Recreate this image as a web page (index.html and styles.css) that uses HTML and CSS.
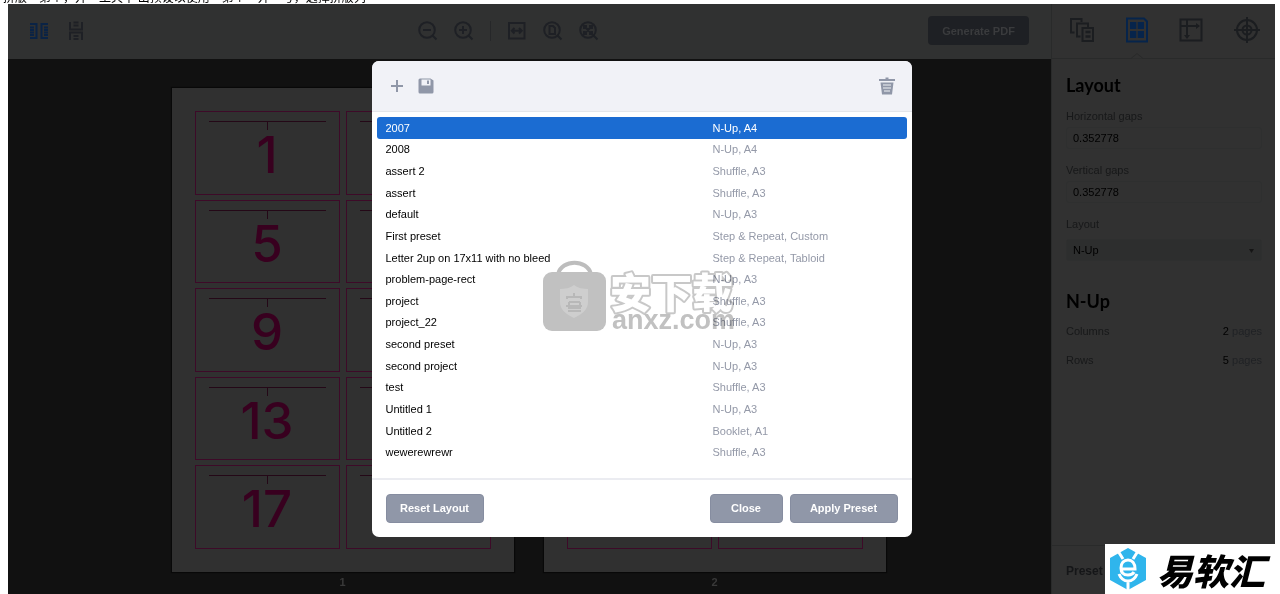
FILE: index.html
```html
<!DOCTYPE html>
<html lang="en">
<head>
<meta charset="utf-8">
<title>Layout presets</title>
<link rel="stylesheet" href="styles.css">
</head>
<body>
<p class="caption" lang="zh">拼版”第个，并“工具中 出预设以使用“第个”并“号，选择拼版列</p>
<main class="app">
  <section class="workspace">
    <header class="toolbar">
      <div class="tools views">
        <button class="tool active" aria-label="Side by side"><svg width="20" height="18" viewBox="0 0 20 18"><path d="M1 2h6.500v14H1M19 2h-6.500v14H19M1 5.500h4M1 8h4M1 10.500h4M1 13h4M15 5.500h4M15 8h4M15 10.500h4M15 13h4"/></svg></button>
        <button class="tool" aria-label="Stacked"><svg width="14" height="20" viewBox="0 0 14 20"><path d="M1 1v7.500h12V1M1 19v-7.500h12V19M4.500 1.500h5M4.500 4.500h5M4.500 15h5M4.500 18h5"/></svg></button>
      </div>
      <div class="tools zoom">
        <button class="tool" aria-label="Zoom out"><svg width="20" height="20" viewBox="0 0 20 20"><circle cx="9" cy="9" r="7.800"/><path d="M14.500 14.500l4 4M5 9h8"/></svg></button>
        <button class="tool" aria-label="Zoom in"><svg width="20" height="20" viewBox="0 0 20 20"><circle cx="9" cy="9" r="7.800"/><path d="M14.500 14.500l4 4M5 9h8M9 5v8"/></svg></button>
        <span class="divider"></span>
        <button class="tool" aria-label="Fit width"><svg width="20" height="20" viewBox="0 0 20 20"><path d="M2 2h15.500v15.500H2zM5 9.800h10M7.500 7L4.800 9.800l2.700 2.700M12 7l2.700 2.800-2.700 2.700"/></svg></button>
        <button class="tool" aria-label="Fit page"><svg width="20" height="20" viewBox="0 0 20 20"><circle cx="9" cy="9" r="7.800"/><path d="M14.500 14.500l4 4M6.500 5h3.500l2 2v6H6.500z"/></svg></button>
        <button class="tool" aria-label="Fit all"><svg width="20" height="20" viewBox="0 0 20 20"><circle cx="9" cy="9" r="7.800"/><path d="M14.500 14.500l4 4M5.500 5.500l7 7M12.500 5.500l-7 7M5 8V5h3M10 5h3v3M13 10v3h-3M8 13H5v-3"/></svg></button>
      </div>
      <button class="generate">Generate PDF</button>
    </header>
    <div class="canvas">
      <figure class="sheet-box">
        <div class="sheet">
          <div class="cell">1</div><div class="cell"></div>
          <div class="cell">5</div><div class="cell"></div>
          <div class="cell">9</div><div class="cell"></div>
          <div class="cell">13</div><div class="cell"></div>
          <div class="cell">17</div><div class="cell"></div>
        </div>
        <figcaption>1</figcaption>
      </figure>
      <figure class="sheet-box">
        <div class="sheet">
          <div class="cell"></div><div class="cell"></div>
          <div class="cell"></div><div class="cell"></div>
          <div class="cell"></div><div class="cell"></div>
          <div class="cell"></div><div class="cell"></div>
          <div class="cell"></div><div class="cell"></div>
        </div>
        <figcaption>2</figcaption>
      </figure>
    </div>
  </section>

  <aside class="panel">
    <nav class="tabs">
      <button class="tab" aria-label="Pages"><svg width="24" height="24" viewBox="0 0 24 24"><path d="M4.500 14.500H1V1h10.500v3M10.500 18.500H7V5.500h11V9M12.500 10h10.500v13H12.500z"/><path d="M15.500 14h5M15.500 18.500h5" stroke-width="2.500"/></svg></button>
      <button class="tab active" aria-label="Layout"><svg width="24" height="26" viewBox="0 0 24 26"><path d="M2 1.500h17l3 3v20H2z"/><path class="solid" d="M5 5h6.300v7H5zM12.700 5H19v7h-6.300zM5 14h6.300v7H5zM12.700 14H19v7h-6.300z"/></svg></button>
      <button class="tab" aria-label="Margins"><svg width="24" height="24" viewBox="0 0 24 24"><path d="M1.500 1.500h21v21h-21zM8 1.500V19M1.500 8H18"/><path class="solid" d="M5 17h6L8 21zM17 5v6L21 8z"/></svg></button>
      <button class="tab" aria-label="Marks"><svg width="26" height="26" viewBox="0 0 26 26"><circle cx="13" cy="13" r="10"/><circle cx="13" cy="13" r="4.500"/><path d="M13 0v26M0 13h26"/></svg></button>
      <svg class="pointer" width="12" height="6" viewBox="0 0 12 6"><path d="M0 5.500L6 .5l6 5"/></svg>
    </nav>
    <div class="settings">
      <h2>Layout</h2>
      <label for="hgap">Horizontal gaps</label>
      <input id="hgap" type="text" value="0.352778">
      <label for="vgap">Vertical gaps</label>
      <input id="vgap" type="text" value="0.352778">
      <label for="layout">Layout</label>
      <div class="select-box">
        <select id="layout"><option>N-Up</option></select>
        <svg class="caret" width="5" height="4" viewBox="0 0 5 4"><path d="M0 0h5L2.500 4z"/></svg>
      </div>
      <h2 class="second">N-Up</h2>
      <div class="pair"><span>Columns</span><span class="amount"><b>2</b> pages</span></div>
      <div class="pair"><span>Rows</span><span class="amount"><b>5</b> pages</span></div>
    </div>
    <footer class="presets">Preset</footer>
  </aside>

  <div class="overlay">
    <div class="dialog" role="dialog" aria-label="Presets">
      <header class="dialog-head">
        <button class="icon" aria-label="Add"><svg width="14" height="14" viewBox="0 0 14 14"><path d="M6 1h2v5h5v2H8v5H6V8H1V6h5z"/></svg></button>
        <button class="icon" aria-label="Save"><svg width="16" height="16" viewBox="0 0 16 16"><path fill-rule="evenodd" d="M2 .5h10.500l3 2V14a1.500 1.500 0 0 1-1.500 1.500H2A1.500 1.500 0 0 1 .5 14V2A1.500 1.500 0 0 1 2 .5zM3.500 1.500v6h9v-6zM9 2.500h2V6H9z"/></svg></button>
        <button class="icon trash" aria-label="Delete"><svg width="16" height="18" viewBox="0 0 16 18"><path fill-rule="evenodd" d="M0 2h6.500V.5h3V2H16v2H0zM1.500 5.500h13L13 17.500H3zM4 7.500v1h8v-1zM4 10.500v1h8v-1zM5 13.500v1h6v-1z"/></svg></button>
      </header>
      <div class="dialog-body">
        <table class="list">
          <tr class="selected"><td>2007</td><td>N-Up, A4</td></tr>
          <tr><td>2008</td><td>N-Up, A4</td></tr>
          <tr><td>assert 2</td><td>Shuffle, A3</td></tr>
          <tr><td>assert</td><td>Shuffle, A3</td></tr>
          <tr><td>default</td><td>N-Up, A3</td></tr>
          <tr><td>First preset</td><td>Step &amp; Repeat, Custom</td></tr>
          <tr><td>Letter 2up on 17x11 with no bleed</td><td>Step &amp; Repeat, Tabloid</td></tr>
          <tr><td>problem-page-rect</td><td>N-Up, A3</td></tr>
          <tr><td>project</td><td>Shuffle, A3</td></tr>
          <tr><td>project_22</td><td>Shuffle, A3</td></tr>
          <tr><td>second preset</td><td>N-Up, A3</td></tr>
          <tr><td>second project</td><td>N-Up, A3</td></tr>
          <tr><td>test</td><td>Shuffle, A3</td></tr>
          <tr><td>Untitled 1</td><td>N-Up, A3</td></tr>
          <tr><td>Untitled 2</td><td>Booklet, A1</td></tr>
          <tr><td>wewerewrewr</td><td>Shuffle, A3</td></tr>
        </table>
      </div>
      <footer class="dialog-foot">
        <button class="action reset">Reset Layout</button>
        <button class="action close">Close</button>
        <button class="action apply">Apply Preset</button>
      </footer>
      <svg class="watermark" width="196" height="76" viewBox="0 0 196 76">
        <path d="M16 15c4-15 29-15 33 0" fill="none" stroke="#bdbdbd" stroke-width="4"/>
        <rect x="1" y="13" width="63" height="59" rx="9" fill="#c1c1c1"/>
        <path d="M32 26c4 3 9 4 14 4v13c0 8-6 12-14 16-8-4-14-8-14-16V30c5 0 10-1 14-4z" fill="#cecece"/>
        <path d="M32 34v4M25 40v-2h14v2M27 43h11M24 47h16M27 43v6h11v-6M26 52h13" fill="none" stroke="#b8b8b8" stroke-width="2"/>
        <text class="mark-cn" x="68" y="49">安下载</text>
        <text class="mark-url" x="70" y="70">anxz.com</text>
      </svg>
    </div>
  </div>

  <div class="brand">
    <svg width="38" height="44" viewBox="0 0 38 44">
      <path d="M19 1l18 10v22L19 43 1 33V11z" fill="#2fb5ec"/>
      <g fill="none" stroke="#fff" stroke-width="3">
        <path d="M9 4l5 8M29 4l-5 8M19 43V33M10 27c2 5 5 7 9 7s7-2 9-7"/>
        <path d="M12 22h14c0-6-3-9-7-9s-7 3-7 8 3 7 7 7c3 0 5-1 6-3"/>
      </g>
    </svg>
    <span lang="zh">易软汇</span>
  </div>
</main>
</body>
</html>
```
FILE: styles.css
```css
* { box-sizing: border-box; }

body {
  margin: 0;
  background: #fff;
  font: 11px/16px "Liberation Sans", Arial, sans-serif;
  color: #000;
}

button, input, select {
  font: inherit;
  margin: 0;
  border: 0;
  padding: 0;
  background: none;
}

svg { display: block; }

.caption {
  display: flex;
  align-items: flex-end;
  height: 4px;
  margin: 0 0 0 3px;
  overflow: hidden;
  font: 12px/14px "Noto Sans CJK SC", sans-serif;
  white-space: nowrap;
}

.app {
  position: relative;
  display: flex;
  min-height: calc(100vh - 4px);
  margin: 0 5px 0 8px;
  background: #111;
}

.workspace {
  flex: 1;
  display: flex;
  flex-direction: column;
}

.toolbar {
  display: flex;
  align-items: center;
  justify-content: space-between;
  height: 55px;
  padding: 0 22px 2px 21px;
  background: #303131;
}

.tools {
  display: flex;
  align-items: center;
  gap: 16px;
}

.views { gap: 20px; }

.zoom { padding-left: 5px; }

.tool svg {
  fill: none;
  stroke: #1e2025;
  stroke-width: 2;
}

.tool.active svg { stroke: #0a2345; }

.divider {
  width: 1px;
  height: 20px;
  background: #262729;
}

.generate {
  width: 101px;
  height: 29px;
  border-radius: 4px;
  background: #1e2024;
  color: #3a3b3d;
  font-weight: bold;
}

.canvas {
  flex: 1;
  display: flex;
  justify-content: center;
  gap: 30px;
  padding: 29px 2px 0 0;
}

.sheet-box {
  margin: 0;
  text-align: center;
  color: #393939;
  font-weight: bold;
}

.sheet-box figcaption { padding-top: 2px; }

.sheet {
  display: grid;
  grid-template-columns: 145px 145px;
  grid-template-rows: repeat(5, 1fr);
  gap: 5px 6px;
  height: 484px;
  padding: 23px;
  background: #303030;
  box-shadow: 0 0 1px 1px #080808;
}

.cell {
  display: flex;
  flex-direction: column;
  align-items: center;
  padding-top: 9px;
  border: 1px solid #3d0a28;
  color: #38001f;
  font: 500 51px/50px Inter, sans-serif;
}

/* Ruler line with a centre tick above each page number */
.cell::before {
  content: "";
  width: 117px;
  height: 9px;
  background: linear-gradient(#240817, #240817) top / 100% 1px no-repeat,
              linear-gradient(#240817, #240817) center / 1px 100% no-repeat;
}

.panel {
  display: flex;
  flex-direction: column;
  width: 224px;
  border-left: 1px solid #292a2a;
  background: #313131;
}

.tabs {
  position: relative;
  display: flex;
  align-items: center;
  justify-content: space-between;
  height: 55px;
  padding: 0 15px 2px 18px;
  border-bottom: 1px solid #292a2a;
}

.tab svg {
  fill: none;
  stroke: #1b1d20;
  stroke-width: 2;
}

.tab .solid {
  fill: #1b1d20;
  stroke: none;
}

.tab.active svg { stroke: #06244b; }
.tab.active .solid { fill: #06244b; }

.pointer {
  position: absolute;
  left: 79px;
  bottom: -1px;
  fill: #313131;
  stroke: #292a2a;
}

.settings {
  flex: 1;
  display: flex;
  flex-direction: column;
  padding: 14px 13px 0 14px;
  color: #171819;
}

h2 {
  margin: 0 0 11px;
  color: #000;
  font: bold 18px/24px Lato, sans-serif;
}

h2.second { margin: 28px 0 10px; }

.settings label { margin-bottom: 3px; }

.settings input,
.select-box select {
  height: 22px;
  padding: 0 6px;
  border: 1px solid #2e2f2f;
  border-radius: 3px;
  color: #000;
}

.settings input { margin-bottom: 13px; }

.select-box {
  position: relative;
  margin-top: 4px;
}

.select-box select {
  display: block;
  width: 100%;
  appearance: none;
  background: #2d2e2e;
}

.caret {
  position: absolute;
  right: 8px;
  top: 10px;
  fill: #151515;
}

.pair {
  display: flex;
  justify-content: space-between;
  margin-bottom: 13px;
}

.amount { color: #202225; }

.amount b {
  color: #000;
  font-weight: normal;
}

.presets {
  height: 49px;
  padding: 17px 14px;
  border-top: 1px solid #292a2a;
  color: #151618;
  font-size: 12px;
  font-weight: bold;
}

.overlay {
  position: absolute;
  inset: 0;
  display: grid;
  place-items: center;
}

.dialog {
  position: relative;
  width: 540px;
  overflow: hidden;
  border-radius: 7px;
  background: #fff;
}

.dialog-head {
  display: flex;
  align-items: center;
  gap: 14px;
  height: 51px;
  padding: 0 17px 0 18px;
  border-bottom: 1px solid #e4e6ea;
  background: #f1f2f7;
}

.icon svg { fill: #9097a8; }

.trash { margin-left: auto; }

.dialog-body {
  padding: 5px 5px 15px;
  border-bottom: 2px solid #ebecf1;
}

.list {
  width: 100%;
  height: 346px;
  border-spacing: 0;
}

.list td {
  padding: 0;
  color: #9499a8;
}

.list td:first-child {
  width: 336px;
  padding-left: 9px;
  color: #000;
}

.list .selected td,
.list .selected td:first-child {
  background: #1b6cd2;
  color: #fff;
}

.list .selected td:first-child { border-radius: 3px 0 0 3px; }
.list .selected td:last-child { border-radius: 0 3px 3px 0; }

.dialog-foot {
  display: flex;
  gap: 7px;
  padding: 14px;
}

.action {
  height: 29px;
  padding-bottom: 1px;
  border: 1px solid #868da0;
  border-radius: 4px;
  background: #9097a8;
  color: #fff;
  font-weight: bold;
}

.reset {
  width: 98px;
  margin-right: auto;
}

.close { width: 73px; }
.apply { width: 108px; }

.watermark {
  position: absolute;
  left: 170px;
  top: 198px;
  mix-blend-mode: multiply;
  pointer-events: none;
}

.mark-cn {
  font: 900 41px "Noto Sans CJK SC", sans-serif;
  fill: #fff;
  stroke: #c8c8c8;
  stroke-width: 4px;
  stroke-linejoin: round;
  paint-order: stroke;
}

.mark-url {
  font: bold 27px "Liberation Sans", Arial, sans-serif;
  fill: #c1c1c1;
}

.brand {
  position: absolute;
  right: 0;
  bottom: 0;
  display: flex;
  align-items: center;
  gap: 10px;
  width: 170px;
  height: 50px;
  padding-left: 4px;
  background: #fff;
  font: italic 900 36px/50px "Noto Sans CJK SC", sans-serif;
  white-space: nowrap;
}
```
